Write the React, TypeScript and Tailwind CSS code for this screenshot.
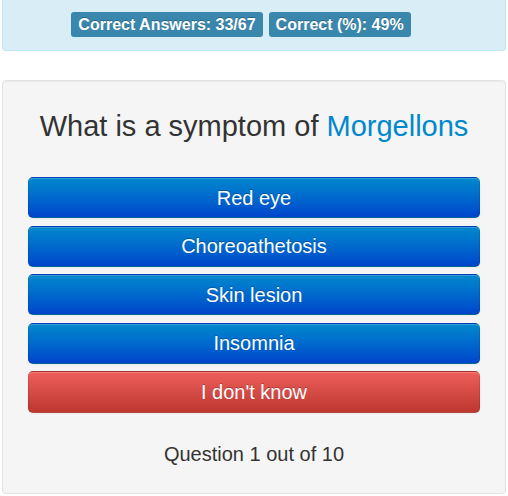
import React from 'react';

const answers = ['Red eye', 'Choreoathetosis', 'Skin lesion', 'Insomnia'];

const Label: React.FC<{children: React.ReactNode}> = ({children}) => (
    <span className="inline-block h-[25px] px-[7px] leading-[25px] rounded-[3px] bg-[#3a87ad] text-white font-bold text-[16px] [text-shadow:0_-1px_0_rgba(0,0,0,0.25)]">
        {children}
    </span>
);

const App: React.FC = () => {
    return (
        <div className="min-h-[496px] bg-white px-[2px] font-['Liberation_Sans',Arial,sans-serif] text-[#333]">
            <div className="h-[51px] pt-[12px] pl-[14px] pr-[40px] bg-[#d9edf7] border border-t-0 border-[#bce8f1] rounded-b-[4px] flex justify-center gap-[6px]">
                <Label>Correct Answers: 33/67</Label>
                <Label>Correct (%): 49%</Label>
            </div>

            <div className="mt-[29px] h-[414px] bg-[#f5f5f5] border border-[#e3e3e3] rounded-[4px] shadow-[inset_0_1px_1px_rgba(0,0,0,0.05)] pt-[29px] px-[25px]">
                <h3 className="text-center text-[29px] leading-[32px] text-[#333]">
                    What is a symptom of <span className="text-[#0088cc]">Morgellons</span>
                </h3>

                <div className="mt-[35px] flex flex-col gap-[7.5px]">
                    {answers.map((a) => (
                        <button
                            key={a}
                            className="h-[41px] w-full rounded-[5px] border border-[rgba(0,0,0,0.1)] border-b-[rgba(0,0,0,0.25)] bg-gradient-to-b from-[#0088cc] to-[#0044cc] text-white text-[20px] [text-shadow:0_-1px_0_rgba(0,0,0,0.25)] shadow-[inset_0_1px_0_rgba(255,255,255,0.2),0_1px_2px_rgba(0,0,0,0.05)]"
                        >
                            {a}
                        </button>
                    ))}
                    <button className="h-[42px] w-full rounded-[5px] border border-[rgba(0,0,0,0.1)] border-b-[rgba(0,0,0,0.25)] bg-gradient-to-b from-[#ee5f5b] to-[#bd362f] text-white text-[20px] [text-shadow:0_-1px_0_rgba(0,0,0,0.25)] shadow-[inset_0_1px_0_rgba(255,255,255,0.2),0_1px_2px_rgba(0,0,0,0.05)]">
                        I don't know
                    </button>
                </div>

                <p className="mt-[27px] text-center text-[20px] leading-[28px] text-[#333]">Question 1 out of 10</p>
            </div>
        </div>
    );
};

export default App;
